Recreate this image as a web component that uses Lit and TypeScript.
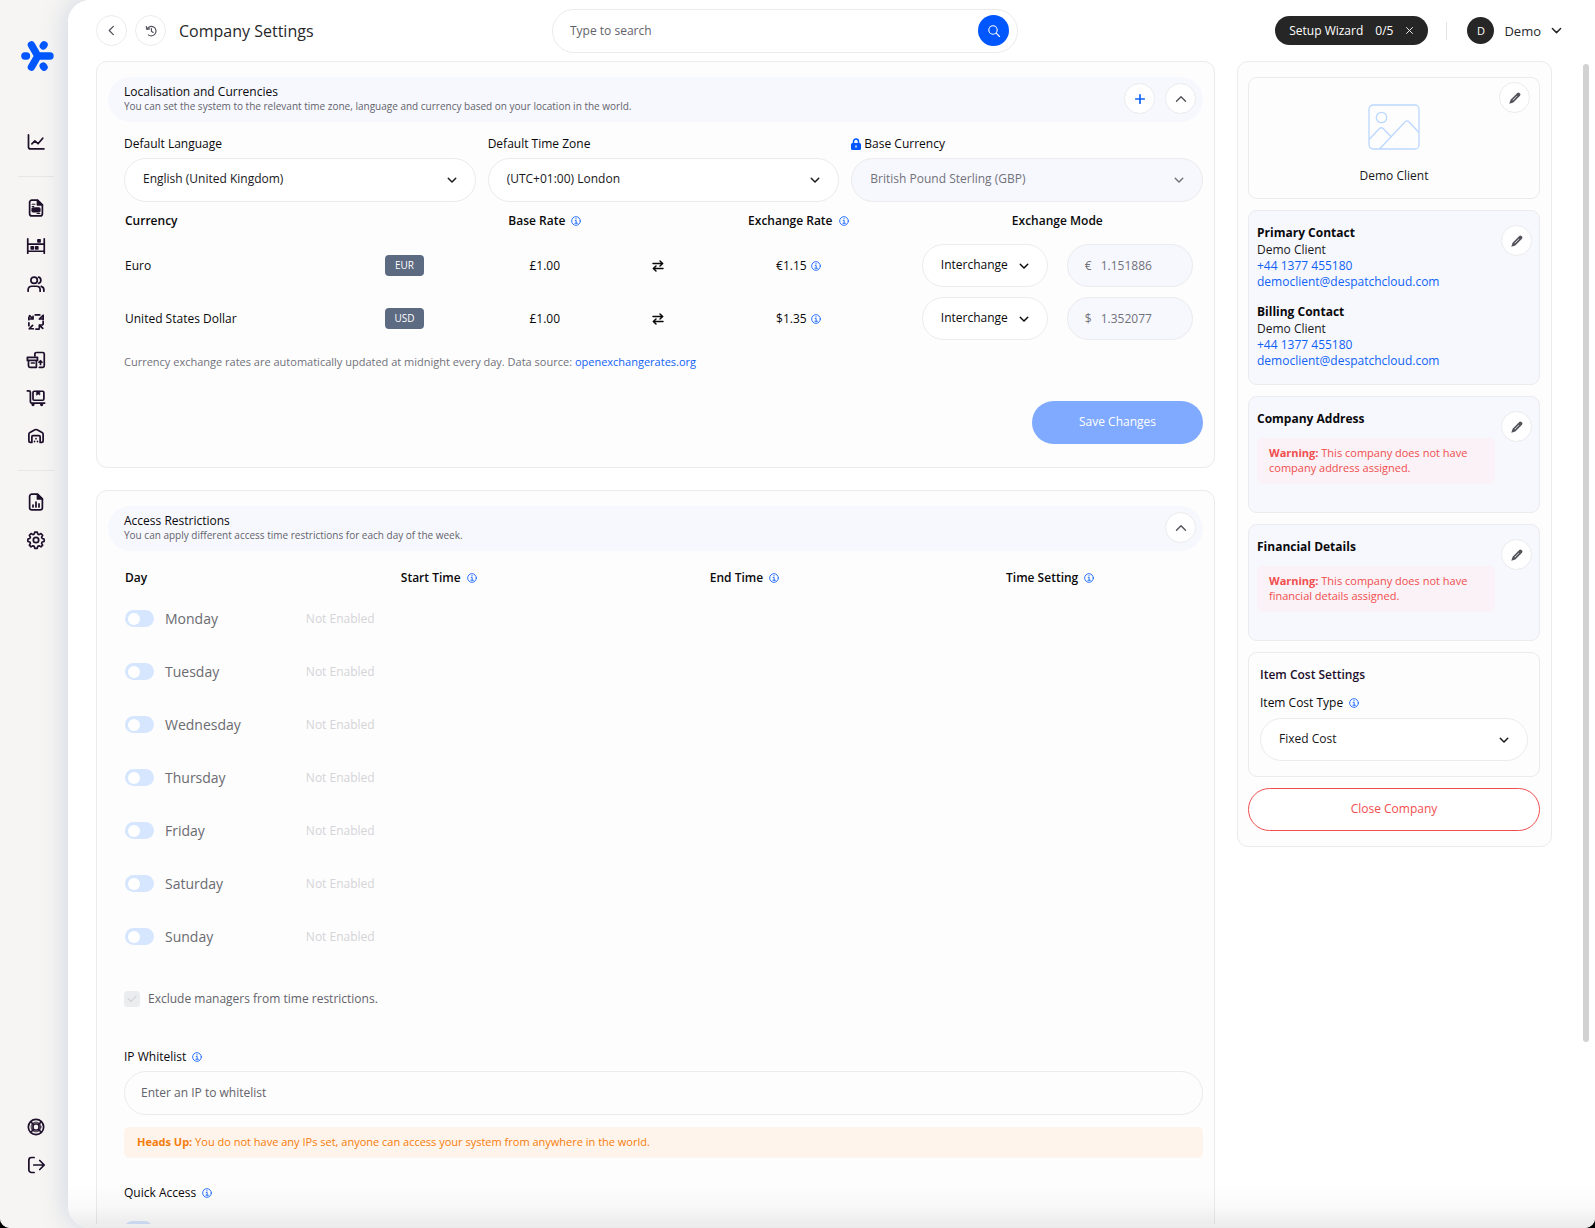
import { LitElement, html, svg, css, nothing, type TemplateResult } from "lit";
import { customElement, property } from "lit/decorators.js";
import { classMap } from "lit/directives/class-map.js";

/* ---------- icon set ---------- */

type Glyph = { box: string; art: TemplateResult };

const glyphs: Record<string, Glyph> = {
  logo: {
    box: "0 0 33 30",
    art: svg`<g stroke="#0057ff" stroke-width="7.400" stroke-linecap="round" stroke-linejoin="round">
      <path d="M10.4 3.900 16.8 15 10.4 26.100M16.8 15H29"/>
      <path d="M3.900 15h1.600"/>
      <path d="m22.3 4.900.7-1M22.3 25.100l.7 1"/></g>`,
  },
  chart: { box: "0 0 24 24", art: svg`<path d="M2 2.500v16.2c0 1.6 1 2.6 2.6 2.6H22.500M6.500 14.500l4-4 4.200 3.800L21 7"/>` },
  document: {
    box: "0 0 24 24",
    art: svg`<path d="M14 1.500H6.500a3 3 0 0 0-3 3v15a3 3 0 0 0 3 3h11a3 3 0 0 0 3-3V8z"/>
      <path d="M14 2v6h6.500z" fill="currentColor"/><path d="M7 7h3.500M7 10h2" stroke-width="1.600"/>
      <rect x="7" y="12.200" width="10" height="4.600" rx="1" fill="currentColor"/><path d="M13.500 19.300H17" stroke-width="1.600"/>`,
  },
  shelf: {
    box: "0 0 24 24",
    art: svg`<path d="M1 2.500v19M23 2.500v19M1 9.500h22M1 19h22"/>
      <g fill="currentColor" stroke="none"><rect x="13.500" y="2.500" width="5" height="5" rx="1"/><rect x="4.500" y="12" width="5" height="5" rx="1"/><rect x="10.500" y="12" width="5" height="5" rx="1"/></g>`,
  },
  users: {
    box: "0 0 24 24",
    art: svg`<circle cx="9.500" cy="7" r="4.300"/><path d="M1.500 21.500v-1.700c0-3 2-4.800 4.800-4.800h6.400c2.800 0 4.800 1.800 4.800 4.800v1.700M15.500 2.900a4.300 4.300 0 0 1 0 8.200M19 15.200c2.200.700 3.500 2.400 3.500 4.600v1.700"/>`,
  },
  cycle: {
    box: "0 0 24 24",
    art: svg`<path d="M2.500 9V5.500M3.500 3.500 8 8M8 4.500V8H4.500M11 2.500h6M21.500 8.500V3M21.500 3 16.500 8M16.500 8h4M2.500 13v4M3 21h5.500M3 21l4.500-4.500M21.500 11v4M12 21.500h4M16.500 16l4.500 4.500M16.500 20v-4h4"/>`,
  },
  boxes: {
    box: "0 0 24 24",
    art: svg`<path d="M10.500 6.500v-2.500a2 2 0 0 1 2-2h8.500a2 2 0 0 1 2 2v15.700a2 2 0 0 1-2 2H16.500"/>
      <path d="M.500 8.500h13.500v4H.500zM2 12.500v7.200a2 2 0 0 0 2 2h8.500v-9.200M6 16h3.500M18 18v-5m-2 2 2-2 2 2"/>`,
  },
  trolley: {
    box: "0 0 24 24",
    art: svg`<path d="M.500 2.500h2a2 2 0 0 1 2 2V17a1.800 1.800 0 0 0 1.800 1.800H23.500"/><rect x="8" y="3" width="14.500" height="12" rx="1.600"/>
      <path d="M13 3h4v5l-2-1.400L13 8z" fill="currentColor" stroke-width="1"/><circle cx="8" cy="20.800" r="1"/><circle cx="19.500" cy="20.800" r="1"/>`,
  },
  warehouse: {
    box: "0 0 24 24",
    art: svg`<path d="M6 20.500H4.300A1.800 1.800 0 0 1 2.500 18.700V9.500c0-1 .500-1.800 1.400-2.200l6.700-3.600a3 3 0 0 1 2.800 0l6.700 3.600c.900.400 1.400 1.200 1.400 2.200v9.200a1.800 1.800 0 0 1-1.800 1.800H18M6.500 20.500V13A1.500 1.500 0 0 1 8 11.500h8a1.500 1.500 0 0 1 1.500 1.500v7.500M12 15.500v.100M10 19.300v.100M14 19.300v.100"/>`,
  },
  report: {
    box: "0 0 24 24",
    art: svg`<path d="M14 1.500H6.500a3 3 0 0 0-3 3v15a3 3 0 0 0 3 3h11a3 3 0 0 0 3-3V8z"/><path d="M14 2v6h6.500z" fill="currentColor"/><path d="M8 18.500v-2.500M12 18.500v-6.500M16 18.500v-4"/>`,
  },
  gear: {
    box: "0 0 24 24",
    art: svg`<circle cx="12" cy="12" r="3.600"/><path d="m10.300 1.900h3.400l.700 2.700 1.900.800 2.500-1.500 2.400 2.400-1.500 2.500.800 1.900 2.700.700v3.400l-2.700.700-.800 1.900 1.500 2.500-2.400 2.400-2.500-1.500-1.900.800-.700 2.700h-3.400l-.700-2.700-1.900-.800-2.500 1.500-2.400-2.400 1.500-2.500-.800-1.900-2.700-.700v-3.400l2.700-.700.800-1.900-1.500-2.500 2.400-2.400 2.500 1.500 1.900-.800z" transform="translate(.4 -.4) scale(.967)"/>`,
  },
  help: {
    box: "0 0 24 24",
    art: svg`<circle cx="12" cy="12" r="10.200"/><rect x="8" y="8" width="8" height="8" rx="2.500"/><path d="m5 5 4 4M19 5l-4 4M5 19l4-4M19 19l-4-4"/><circle cx="12" cy="12" r="6.500" stroke-width="1.200"/>`,
  },
  logout: { box: "0 0 24 24", art: svg`<path d="M9.500 2H6a3.500 3.500 0 0 0-3.500 3.500v13A3.500 3.500 0 0 0 6 22h3.500M9 12h13.500M17 6l6 6-6 6"/>` },
  left: { box: "0 0 12 12", art: svg`<path d="M8 1.500 3.500 6 8 10.500"/>` },
  up: { box: "0 0 12 12", art: svg`<path d="M1.500 8.300 6 3.800l4.500 4.500"/>` },
  down: { box: "0 0 12 12", art: svg`<path d="M1.500 3.800 6 8.300l4.500-4.500"/>` },
  plus: { box: "0 0 12 12", art: svg`<path d="M6 1.800v8.400M1.800 6h8.400"/>` },
  close: { box: "0 0 12 12", art: svg`<path d="m2 2 8 8M10 2l-8 8"/>` },
  history: { box: "0 0 14 14", art: svg`<path d="M2.500 4.500A5.500 5.500 0 1 1 4 11.500M1.500 1.800l.600 3.200 3.300-.400M7.500 4.200v3l2 1.500"/>` },
  search: { box: "0 0 12 12", art: svg`<circle cx="5" cy="5" r="4.200"/><path d="m8.200 8.200 3.300 3.300"/>` },
  info: { box: "0 0 12 12", art: svg`<circle cx="6" cy="6" r="5.200"/><path d="M5 5.300h1.200v3.200M4.700 8.700h3M6 3v.600"/>` },
  lock: {
    box: "0 0 10 12",
    art: svg`<path d="M2.500 6V3.500a2.500 2.500 0 0 1 5 0V6"/><path fill="currentColor" stroke="none" fill-rule="evenodd" d="M1.500 5h7A1.500 1.500 0 0 1 10 6.500v4A1.500 1.500 0 0 1 8.500 12h-7A1.500 1.500 0 0 1 0 10.500v-4A1.500 1.500 0 0 1 1.500 5zM4.300 7.500v2h1.400v-2z"/>`,
  },
  swap: { box: "0 0 12 12", art: svg`<path d="M1 3.500h9.500M8 1l2.700 2.500L8 6M11 8.500H1.500M4 6 1.300 8.500 4 11"/>` },
  pencil: {
    box: "0 0 12 12",
    art: svg`<path fill="currentColor" stroke="none" fill-rule="evenodd" d="M8.300 1a1.500 1.500 0 0 1 2.100 0l.600.600a1.500 1.500 0 0 1 0 2.100l-6.700 6.700-4 1.300 1.300-4zM7.800 3.700 3.500 8l.400.400 4.300-4.300z"/>`,
  },
  picture: {
    box: "0 0 52 46",
    art: svg`<rect x="1" y="1" width="50" height="44" rx="4"/><circle cx="13.500" cy="13.500" r="5.200"/><path d="m1.500 35 10-10.500a2.500 2.500 0 0 1 3.600 0L23 32.500M12 44.500l25.200-26.800a2.500 2.500 0 0 1 3.600 0L50.500 28"/>`,
  },
};

@customElement("ui-icon")
export class UiIcon extends LitElement {
  @property() name = "info";
  static styles = css`
    :host { display: inline-flex; flex: none; width: 12px; height: 12px; }
    .art { display: block; width: 100%; height: 100%; overflow: visible; stroke-width: var(--line, 2); }
  `;
  render() {
    const g = glyphs[this.name];
    return html`<svg class="art" viewBox=${g.box} fill="none" stroke="currentColor"
      stroke-linecap="round" stroke-linejoin="round" aria-hidden="true">${g.art}</svg>`;
  }
}

/* ---------- shared look ---------- */

const base = css`
  :host { display: block; font-family: "Open Sans", Inter, sans-serif; font-size: 12px; line-height: 18px; color: #18181b; }
  *, *::before, *::after { box-sizing: border-box; }
  button, input, select { font: inherit; color: inherit; margin: 0; }
  button { cursor: pointer; padding: 0; }
  a { color: #0f62f5; text-decoration: none; }
  .round {
    display: inline-flex; align-items: center; justify-content: center; flex: none;
    width: 31px; height: 31px; border: 1px solid #ebebed; border-radius: 50%; background: #fff; color: #52525b; --line: 1.4;
  }
  .info { width: 10px; height: 10px; color: #1766ff; --line: 1.1; }
  .label { display: inline-flex; align-items: center; gap: 6px; font-weight: 500; color: #09090b; }
  .picker { position: relative; display: flex; align-items: center; }
  .select {
    appearance: none; width: 100%; height: 44px; padding: 0 40px 2px 18px; border: 1px solid #ebebed;
    border-radius: 22px; background: #fff; opacity: 1;
  }
  .select:disabled { background: #f7f8fe; color: #71717a; }
  .caret { position: absolute; right: 19px; width: 10px; height: 10px; pointer-events: none; --line: 1.7; }
  .select:disabled + .caret { color: #71717a; }
  .switch {
    appearance: none; flex: none; width: 29px; height: 17px; padding: 3px; border-radius: 9px; background: #d6e6ff;
    display: inline-flex;
  }
  .switch::before { content: ""; width: 12px; height: 12px; border-radius: 50%; background: #fff; }
`;

/* ---------- side navigation ---------- */

@customElement("side-nav")
export class SideNav extends LitElement {
  static styles = [base, css`
    :host { width: 68px; flex: none; }
    .nav { display: flex; flex-direction: column; align-items: center; height: 100%; padding: 41px 0 44px 4px; background: #f6f5f3; }
    .logo { width: 33px; height: 30px; margin: 0 0 52px 2px; }
    .link { display: flex; align-items: center; justify-content: center; width: 38px; height: 38px; color: #1e0f2b; }
    .icon { width: 18px; height: 18px; --line: 2.3; }
    .rule { width: 36px; height: 1px; margin: 15px 0 12px; border: 0; background: #e8e7e6; }
    .spacer { flex: 1; }
  `];
  private link(icon: string, label: string) {
    return html`<a class="link" href="#${icon}" aria-label=${label}><ui-icon class="icon" name=${icon}></ui-icon></a>`;
  }
  render() {
    return html`<nav class="nav" aria-label="Main">
      <ui-icon class="logo" name="logo"></ui-icon>
      ${this.link("chart", "Dashboard")}
      <hr class="rule" />
      ${this.link("document", "Orders")} ${this.link("shelf", "Inventory")} ${this.link("users", "Customers")}
      ${this.link("cycle", "Returns")} ${this.link("boxes", "Goods in")} ${this.link("trolley", "Picking")}
      ${this.link("warehouse", "Warehouse")}
      <hr class="rule" />
      ${this.link("report", "Reports")} ${this.link("gear", "Settings")}
      <span class="spacer"></span>
      ${this.link("help", "Help")} ${this.link("logout", "Log out")}
    </nav>`;
  }
}

/* ---------- top bar ---------- */

@customElement("top-bar")
export class TopBar extends LitElement {
  static styles = [base, css`
    .bar { display: grid; grid-template-columns: 456fr 466fr 544fr; align-items: center; height: 61px; padding: 0 33px 0 28px; }
    .start, .end { display: flex; align-items: center; }
    .start { gap: 8px; }
    .back { width: 11px; height: 11px; }
    .title { margin: 0 0 0 5px; font-size: 16px; line-height: 24px; font-weight: 500; color: #27272a; white-space: nowrap; }
    .search { display: flex; align-items: center; height: 44px; padding: 0 8px 0 17px; border: 1px solid #ebebed; border-radius: 22px; background: #fff; }
    .query { flex: 1; min-width: 0; padding: 0; border: 0; outline: 0; background: none; }
    .query::placeholder { color: #63636b; opacity: 1; }
    .go { border: 0; background: #0057ff; color: #fff; --line: 1.1; }
    .end { justify-content: flex-end; }
    .wizard { display: flex; align-items: center; gap: 12px; height: 29px; padding: 0 14px; border: 0; border-radius: 15px; background: #262626; color: #fff; font-weight: 500; white-space: nowrap; }
    .x { width: 9px; height: 9px; --line: 1.2; }
    .split { width: 1px; height: 18px; margin: 0 20px 0 18px; background: #e4e4e7; }
    .account { display: flex; align-items: center; gap: 10px; border: 0; background: none; color: #27272a; font-size: 13px; font-weight: 500; }
    .avatar { display: flex; align-items: center; justify-content: center; width: 27px; height: 27px; border-radius: 50%; background: #262626; color: #fff; font-size: 11px; font-weight: 400; }
    .more { width: 11px; height: 11px; --line: 1.6; }
  `];
  render() {
    return html`<header class="bar">
      <div class="start">
        <button class="round" aria-label="Back"><ui-icon class="back" name="left"></ui-icon></button>
        <button class="round" aria-label="History"><ui-icon name="history"></ui-icon></button>
        <h1 class="title">Company Settings</h1>
      </div>
      <form class="search" role="search" @submit=${(e: Event) => e.preventDefault()}>
        <input class="query" type="text" aria-label="Search" placeholder="Type to search" />
        <button class="round go" aria-label="Search"><ui-icon name="search"></ui-icon></button>
      </form>
      <div class="end">
        <button class="wizard"><span>Setup Wizard</span><span>0/5</span><ui-icon class="x" name="close"></ui-icon></button>
        <span class="split"></span>
        <button class="account"><span class="avatar">D</span><span>Demo</span><ui-icon class="more" name="down"></ui-icon></button>
      </div>
    </header>`;
  }
}

/* ---------- section card with a heading band ---------- */

@customElement("section-card")
export class SectionCard extends LitElement {
  @property() heading = "";
  @property() hint = "";
  @property({ type: Boolean }) addable = false;
  static styles = [base, css`
    .card { padding: 15px 11px 23px; border: 1px solid #ebebed; border-radius: 11px; background: #fdfdfd; }
    .band { display: flex; align-items: center; gap: 10px; height: 45px; padding: 0 7px 2px 16px; border-radius: 23px; background: #f7f8fe; }
    .words { flex: 1; min-width: 0; }
    .heading { margin: 0; font-size: 12px; line-height: 15px; font-weight: 500; color: #09090b; }
    .hint { margin: 0; font-size: 10px; line-height: 15px; color: #63636b; }
    .body { padding-left: 16px; }
    .add { color: #0f62f5; --line: 1.7; }
  `];
  render() {
    return html`<section class="card">
      <div class="band">
        <div class="words"><h2 class="heading">${this.heading}</h2><p class="hint">${this.hint}</p></div>
        ${this.addable ? html`<button class="round add" aria-label="Add"><ui-icon name="plus"></ui-icon></button>` : nothing}
        <button class="round" aria-label="Collapse"><ui-icon name="up"></ui-icon></button>
      </div>
      <div class="body"><slot></slot></div>
    </section>`;
  }
}

/* ---------- localisation ---------- */

const currencies = [
  { name: "Euro", code: "EUR", rate: "€1.15", sign: "€", value: "1.151886" },
  { name: "United States Dollar", code: "USD", rate: "$1.35", sign: "$", value: "1.352077" },
];

@customElement("localisation-panel")
export class LocalisationPanel extends LitElement {
  static styles = [base, css`
    .fields { display: grid; grid-template-columns: repeat(3, minmax(0, 1fr)); gap: 12px; padding-top: 13px; }
    .field { display: flex; flex-direction: column; gap: 5px; }
    .tight { gap: 3px; }
    .lock { width: 10px; height: 12px; color: #0057ff; --line: 1.5; }
    .rates { width: 100%; table-layout: fixed; border-collapse: collapse; text-align: center; font-weight: 500; color: #09090b; }
    .rates td { height: 53px; padding: 0; }
    .rates thead :is(th, td) { height: 37px; padding: 0; font-weight: 600; }
    .rates .name { text-align: left; padding-left: 1px; }
    .w-name { width: 21%; } .w-code { width: 10%; } .w-base { width: 16%; } .w-swap { width: 5%; } .w-rate { width: 21%; }
    .heading { display: inline-flex; align-items: center; gap: 6px; }
    .heading.close { gap: 4px; }
    .code { display: inline-block; width: 39px; border-radius: 4px; background: #5c6a82; color: #fff; font-size: 10px; line-height: 21px; vertical-align: middle; }
    .swap { vertical-align: middle; --line: 1.5; }
    .mode { display: flex; justify-content: center; gap: 19px; }
    .picker { width: 126px; }
    .fields .picker { width: auto; }
    .mode .select { height: 43px; font-weight: 500; padding-right: 30px; }
    .amount { display: flex; align-items: center; gap: 9px; width: 126px; height: 43px; padding: 0 17px; border: 1px solid #ebebed; border-radius: 22px; background: #f7f8fe; color: #71717a; font-weight: 400; }
    .value { width: 100%; min-width: 0; padding: 0; border: 0; background: none; }
    .note { margin: 8px 0 30px; font-size: 11px; color: #71717a; }
    .actions { display: flex; justify-content: flex-end; }
    .save { width: 171px; height: 43px; padding-bottom: 2px; border: 0; border-radius: 22px; background: #80aaff; color: #fff; font-weight: 500; }
  `];
  private field(id: string, label: string, value: string, locked = false) {
    return html`<div class="field">
      <label class=${classMap({ label: true, tight: locked })} for=${id}>
        ${locked ? html`<ui-icon class="lock" name="lock"></ui-icon>` : nothing}${label}</label>
      <div class="picker">
        <select class="select" id=${id} ?disabled=${locked}><option>${value}</option></select>
        <ui-icon class="caret" name="down"></ui-icon>
      </div>
    </div>`;
  }
  render() {
    const info = html`<ui-icon class="info" name="info"></ui-icon>`;
    return html`
      <div class="fields">
        ${this.field("language", "Default Language", "English (United Kingdom)")}
        ${this.field("zone", "Default Time Zone", "(UTC+01:00) London")}
        ${this.field("currency", "Base Currency", "British Pound Sterling (GBP)", true)}
      </div>
      <table class="rates">
        <colgroup><col class="w-name" /><col class="w-code" /><col class="w-base" /><col class="w-swap" /><col class="w-rate" /><col /></colgroup>
        <thead><tr>
          <th class="name" scope="col">Currency</th><td></td>
          <th scope="col"><span class="heading">Base Rate ${info}</span></th><td></td>
          <th scope="col"><span class="heading">Exchange Rate ${info}</span></th>
          <th scope="col">Exchange Mode</th>
        </tr></thead>
        <tbody>${currencies.map((c) => html`<tr>
          <td class="name">${c.name}</td>
          <td><span class="code">${c.code}</span></td>
          <td>£1.00</td>
          <td><ui-icon class="swap" name="swap"></ui-icon></td>
          <td><span class="heading close">${c.rate} ${info}</span></td>
          <td><div class="mode">
            <div class="picker"><select class="select" aria-label="${c.name} exchange mode"><option>Interchange</option></select>
              <ui-icon class="caret" name="down"></ui-icon></div>
            <label class="amount"><span>${c.sign}</span><input class="value" type="text" aria-label="${c.name} rate" .value=${c.value} disabled /></label>
          </div></td>
        </tr>`)}</tbody>
      </table>
      <p class="note">Currency exchange rates are automatically updated at midnight every day. Data source: <a href="#rates">openexchangerates.org</a></p>
      <div class="actions"><button class="save">Save Changes</button></div>`;
  }
}

/* ---------- access restrictions ---------- */

const days = ["Monday", "Tuesday", "Wednesday", "Thursday", "Friday", "Saturday", "Sunday"];

@customElement("access-panel")
export class AccessPanel extends LitElement {
  static styles = [base, css`
    .times { width: 100%; margin-top: 13px; table-layout: fixed; border-collapse: collapse; }
    .times th { height: 28px; padding: 0; font-weight: 600; color: #09090b; }
    .times .label { font-weight: 600; }
    .times td { height: 53px; padding: 0; }
    .w-day { width: 15%; }
    .times .day { text-align: left; padding-left: 1px; }
    .toggle { display: flex; align-items: center; gap: 11px; font-size: 14px; color: #6b6b70; font-weight: 500; }
    .times .off { padding-left: 20px; color: #d4d4d8; }
    .exclude { display: flex; align-items: center; gap: 8px; margin-top: 27px; color: #63636b; }
    .check { appearance: none; width: 16px; height: 16px; border-radius: 4px; background: #ebecee; }
    .check:checked::before { content: ""; display: block; width: 8px; height: 5px; margin: 4px; border: solid #cfcfd4; border-width: 0 0 1px 1px; transform: rotate(-45deg); }
    .ip { margin: 40px 0 5px; }
    .address { display: block; width: 100%; height: 44px; padding: 0 16px 2px; border: 1px solid #ebebed; border-radius: 22px; background: none; }
    .address::placeholder { color: #63636b; opacity: 1; }
    .alert { margin: 12px 0 26px; padding: 0 13px 2px; border-radius: 5px; background: #fff4eb; color: #f57c0a; font-size: 11px; line-height: 29px; }
    .row { display: flex; margin-top: 19px; }
  `];
  render() {
    const info = html`<ui-icon class="info" name="info"></ui-icon>`;
    return html`
      <table class="times">
        <colgroup><col class="w-day" /><col /><col /><col /></colgroup>
        <thead><tr>
          <th class="day" scope="col">Day</th>
          ${["Start Time", "End Time", "Time Setting"].map((t) => html`<th scope="col"><span class="label">${t} ${info}</span></th>`)}
        </tr></thead>
        <tbody>${days.map((d) => html`<tr>
          <td class="day"><label class="toggle"><input class="switch" type="checkbox" role="switch" />${d}</label></td>
          <td class="off" colspan="3">Not Enabled</td>
        </tr>`)}</tbody>
      </table>
      <label class="exclude"><input class="check" type="checkbox" checked disabled />Exclude managers from time restrictions.</label>
      <label class="label ip" for="ip">IP Whitelist <ui-icon class="info" name="info"></ui-icon></label>
      <input class="address" id="ip" type="text" placeholder="Enter an IP to whitelist" />
      <p class="alert"><strong>Heads Up:</strong> You do not have any IPs set, anyone can access your system from anywhere in the world.</p>
      <div class="label">Quick Access ${info}</div>
      <div class="row"><input class="switch" type="checkbox" role="switch" aria-label="Quick Access" /></div>`;
  }
}

/* ---------- company summary ---------- */

@customElement("company-summary")
export class CompanySummary extends LitElement {
  static styles = [base, css`
    .panel { display: flex; flex-direction: column; gap: 11px; padding: 15px 11px 15px 10px; border: 1px solid #ebebed; border-radius: 11px; background: #fdfdfd; }
    .card { position: relative; border: 1px solid #ebebed; border-radius: 9px; }
    .brand { display: flex; flex-direction: column; align-items: center; gap: 17px; padding: 26px 0 13px; font-weight: 500; }
    .picture { width: 52px; height: 46px; color: #bcd8ff; --line: 1.3; }
    .tint { background: #f7f8fe; }
    .contacts { display: flex; flex-direction: column; gap: 13px; padding: 13px 8px 15px; }
    .edit { position: absolute; top: 14px; right: 7px; }
    .brand .edit { top: 4px; right: 9px; }
    .heading { margin: 0; font-size: 12px; line-height: 18px; font-weight: 700; color: #09090b; }
    .contact { display: flex; flex-direction: column; line-height: 16px; }
    .missing { padding: 13px 8px 28px; }
    .warning { margin: 10px 36px 0 0; padding: 7px 12px 9px; border-radius: 5px; background: #faf2f6; color: #f04e4e; font-size: 11px; line-height: 15px; }
    .cost { display: flex; flex-direction: column; padding: 13px 11px 15px; }
    .cost .heading { font-weight: 600; color: #1e0f2b; }
    .type { margin: 10px 0 6px; }
    .select { height: 43px; }
    .closing { height: 43px; padding-bottom: 2px; border: 1px solid #f04e4e; border-radius: 22px; background: #fff; color: #f04e4e; font-weight: 500; }
  `];
  private edit(what: string) {
    return html`<button class="round edit" aria-label="Edit ${what}"><ui-icon name="pencil"></ui-icon></button>`;
  }
  private contact(title: string) {
    return html`<div class="contact"><h3 class="heading">${title}</h3><span>Demo Client</span>
      <a href="tel:+441377455180">+44 1377 455180</a>
      <a href="mailto:democlient@despatchcloud.com">democlient@despatchcloud.com</a></div>`;
  }
  private missing(title: string, what: string) {
    return html`<div class="card tint missing"><h3 class="heading">${title}</h3>
      <p class="warning"><strong>Warning:</strong> This company does not have ${what} assigned.</p>${this.edit(what)}</div>`;
  }
  render() {
    return html`<aside class="panel">
      <div class="card brand"><ui-icon class="picture" name="picture"></ui-icon><span>Demo Client</span>${this.edit("logo")}</div>
      <div class="card tint contacts">${this.contact("Primary Contact")}${this.contact("Billing Contact")}${this.edit("contacts")}</div>
      ${this.missing("Company Address", "company address")}
      ${this.missing("Financial Details", "financial details")}
      <div class="card cost">
        <h3 class="heading">Item Cost Settings</h3>
        <label class="label type" for="cost">Item Cost Type <ui-icon class="info" name="info"></ui-icon></label>
        <div class="picker"><select class="select" id="cost"><option>Fixed Cost</option></select>
          <ui-icon class="caret" name="down"></ui-icon></div>
      </div>
      <button class="closing">Close Company</button>
    </aside>`;
  }
}

/* ---------- application shell ---------- */

@customElement("app-root")
export class AppRoot extends LitElement {
  static styles = [base, css`
    :host { background: #000; }
    .shell { display: flex; height: 100vh; overflow: hidden; border-radius: 0 0 10px 10px; background: #f6f5f3; }
    .main {
      position: relative; display: flex; flex-direction: column; flex: 1; min-width: 0; overflow: hidden;
      border-radius: 22px 0 0 22px; background: #fff;
    }
    .stage { display: flex; flex: 1; min-width: 0; border-radius: 22px 0 0 22px; box-shadow: -2px 0 26px rgba(90, 115, 175, 0.24); z-index: 1; }
    .scroll { flex: 1; min-height: 0; margin-bottom: 4px; overflow-y: auto; scrollbar-width: none; }
    .columns { display: grid; grid-template-columns: minmax(0, 1fr) 315px; align-items: start; gap: 22px; padding: 0 43px 24px 28px; }
    .stack { display: flex; flex-direction: column; gap: 22px; }
    .thumb { position: absolute; top: 64px; bottom: 186px; right: 6px; width: 6px; border-radius: 3px; background: #d2d2d2; }
    .fade { position: absolute; inset: auto 0 0 0; height: 44px; background: linear-gradient(rgba(0, 0, 0, 0), rgba(0, 0, 0, 0.02) 50%, rgba(0, 0, 0, 0.08)); pointer-events: none; }
  `];
  render() {
    return html`<div class="shell">
      <side-nav></side-nav>
      <div class="stage"><main class="main">
        <top-bar></top-bar>
        <div class="scroll"><div class="columns">
          <div class="stack">
            <section-card heading="Localisation and Currencies" addable
              hint="You can set the system to the relevant time zone, language and currency based on your location in the world.">
              <localisation-panel></localisation-panel>
            </section-card>
            <section-card heading="Access Restrictions"
              hint="You can apply different access time restrictions for each day of the week.">
              <access-panel></access-panel>
            </section-card>
          </div>
          <company-summary></company-summary>
        </div></div>
        <div class="thumb"></div>
        <div class="fade"></div>
      </main></div>
    </div>`;
  }
}
